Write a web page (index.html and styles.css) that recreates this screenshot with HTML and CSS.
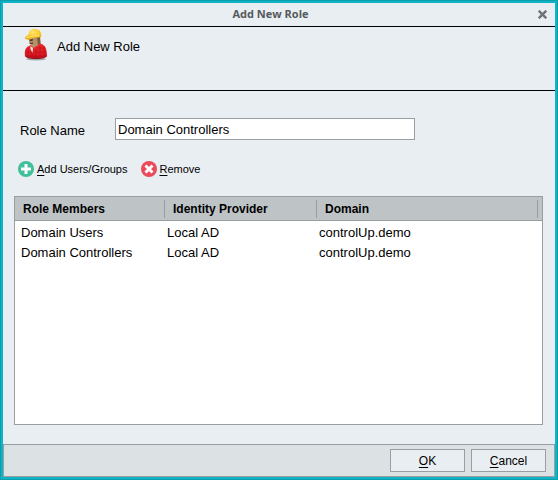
FILE: index.html
```html
<!DOCTYPE html>
<html lang="en">
    <head>
        <meta charset="utf-8">
        <title>Add New Role</title>
        <link rel="stylesheet" href="styles.css">
    </head>
    <body>
        <form class="dialog">
            <div class="titlebar">
                <span class="title">Add New Role</span>
                <button type="button" class="close" aria-label="Close">
                    <svg width="9" height="9" viewBox="0 0 9 9"><path d="M0.700 0.700L8.300 8.300M8.300 0.700L0.700 8.300" stroke="#6d7275" stroke-width="2.400"/></svg>
                </button>
            </div>
            <header class="banner">
                <!-- worker with a hard hat -->
                <svg class="worker" width="24" height="34" viewBox="0 0 24 34">
                    <defs>
                        <linearGradient id="shirt" x1="0" y1="0" x2="0" y2="1">
                            <stop offset="0" stop-color="#ee2a2c"/>
                            <stop offset="0.8" stop-color="#d51522"/>
                            <stop offset="1" stop-color="#8e0d16"/>
                        </linearGradient>
                        <radialGradient id="hat" cx="0.5" cy="0.3" r="0.8">
                            <stop offset="0" stop-color="#ffe770"/>
                            <stop offset="0.5" stop-color="#fbc926"/>
                            <stop offset="1" stop-color="#e9a412"/>
                        </radialGradient>
                    </defs>
                    <ellipse cx="12" cy="31" rx="10" ry="1.500" fill="#9fa3a5"/>
                    <path d="M5 10L16 8L16.500 16L13 20L9 20L7 17L5 15Z" fill="#b48f68"/>
                    <path d="M13 10L16 9L16.500 16L14 17Z" fill="#7b5a3b"/>
                    <path d="M5 11.500L9 11L8.500 13L6 13ZM5.500 15L9 14.500L9 16L6.500 16Z" fill="#4f3a28"/>
                    <path d="M1 28C0 22 2 18.500 7 17L9.500 20L16.500 15.500C21 17 23 20 23 28C22 32 2 32 1 28Z" fill="url(#shirt)"/>
                    <path d="M4 20V30M8 24V31M12 21V31M16 18V31M20 19V30M2 24H22M1 28H23M13 20H21" stroke="#b00f1b" stroke-width="0.500" fill="none"/>
                    <path d="M6.500 18L9 20L8.500 25L6.500 21Z" fill="#f4e7e3"/>
                    <path d="M1 10C1 8 4 8 4.500 6C5 2 8 1 11 1C16 1 18 5 17 9.500C13 9 9 10 6 11.500C3 12 1 11 1 10Z" fill="url(#hat)"/>
                    <path d="M2 9.500C6 9.500 10 7 15 7.500" stroke="#fff0a0" stroke-width="0.700" fill="none"/>
                </svg>
                <h1 class="heading">Add New Role</h1>
            </header>
            <main class="content">
                <div class="field">
                    <label for="role" class="field-label">Role Name</label>
                    <input type="text" id="role" name="role" class="field-input" value="Domain Controllers">
                </div>
                <div class="tools">
                    <button type="button" class="tool">
                        <svg width="16" height="16" viewBox="0 0 16 16"><circle cx="8" cy="8" r="8" fill="#41bf9b"/><path d="M8 3V13M3 8H13" stroke="#fff" stroke-width="3"/></svg>
                        <span><u>A</u>dd Users/Groups</span>
                    </button>
                    <button type="button" class="tool">
                        <svg width="16" height="16" viewBox="0 0 16 16"><circle cx="8" cy="8" r="8" fill="#e94b5b"/><path d="M4.500 4.500L11.500 11.500M11.500 4.500L4.500 11.500" stroke="#fff" stroke-width="3"/></svg>
                        <span><u>R</u>emove</span>
                    </button>
                </div>
                <div class="list">
                    <table class="members">
                        <thead>
                            <tr>
                                <th class="col-member"><div class="head">Role Members</div></th>
                                <th class="col-provider"><div class="head">Identity Provider</div></th>
                                <th class="col-domain"><div class="head">Domain</div></th>
                            </tr>
                        </thead>
                        <tbody>
                            <tr>
                                <td class="first">Domain Users</td>
                                <td>Local AD</td>
                                <td>controlUp.demo</td>
                            </tr>
                            <tr>
                                <td class="first">Domain Controllers</td>
                                <td>Local AD</td>
                                <td>controlUp.demo</td>
                            </tr>
                        </tbody>
                    </table>
                </div>
            </main>
            <footer class="footer">
                <button type="submit" class="button"><span><u>O</u>K</span></button>
                <button type="button" class="button"><span><u>C</u>ancel</span></button>
            </footer>
        </form>
    </body>
</html>
```
FILE: styles.css
```css
* {
    box-sizing: border-box;
}

body {
    margin: 0;
    font-family: "Liberation Sans", Arial, sans-serif;
    font-size: 13px;
    color: #000;
    background: #e9eef2;
}

button {
    font-family: inherit;
    color: inherit;
    padding: 0;
    border: none;
    background: none;
}

u {
    text-underline-offset: 2px;
}

.dialog {
    display: flex;
    flex-direction: column;
    min-height: 100vh;
    border: 1px solid #08a0ae;
    box-shadow: inset 0 0 0 2px #10b3c3;
    padding: 2px;
}

.titlebar {
    display: flex;
    align-items: center;
    height: 24px;
    padding-right: 8px;
    border-bottom: 1px solid #000;
}

.title {
    flex: 1;
    padding-bottom: 2px;
    font-family: "Open Sans", "Noto Sans", sans-serif;
    font-size: 11px;
    line-height: 16px;
    font-weight: 700;
    text-align: center;
    color: #55595c;
}

.close {
    display: flex;
}

.banner {
    display: flex;
    align-items: flex-start;
    gap: 9px;
    height: 64px;
    padding: 1px 21px;
    border-bottom: 1px solid #000;
}

.heading {
    margin: 11px 0 0;
    font-size: 13px;
    line-height: 16px;
    font-weight: normal;
}

.content {
    display: flex;
    flex: 1;
    flex-direction: column;
    padding: 27px 12px 19px 11px;
}

.field {
    display: flex;
    align-items: center;
    padding-left: 6px;
}

.field-label {
    width: 95px;
    line-height: 16px;
    padding-top: 3px;
}

.field-input {
    width: 300px;
    height: 22px;
    padding: 0 2px;
    border: 1px solid #999ea1;
    border-radius: 0;
    background: #fff;
    font-family: inherit;
    font-size: 13px;
}

.tools {
    display: flex;
    gap: 13px;
    padding: 21px 4px 19px;
}

.tool {
    display: flex;
    align-items: center;
    gap: 3px;
    font-size: 11px;
    line-height: 16px;
}

.list {
    flex: 1;
    border: 1px solid #999ea1;
    background: #fff;
}

.members {
    width: 100%;
    table-layout: fixed;
    border-collapse: separate;
    border-spacing: 0;
}

.members th {
    padding: 3px 0 2px;
    border-bottom: 1px solid #999ea1;
    background: #bec4c6;
    font-size: 12px;
    text-align: left;
}

.col-member {
    width: 150px;
}

.col-provider {
    width: 152px;
}

.members th:last-child {
    padding-right: 4px;
}

.head {
    padding-left: 8px;
    border-right: 1px solid #999ea1;
    line-height: 18px;
}

.members td {
    height: 20px;
    padding: 0 2px;
    line-height: 20px;
}

.members td.first {
    padding-left: 6px;
}

.members tbody::before {
    content: "";
    display: table-row;
    height: 2px;
}

.footer {
    display: flex;
    justify-content: flex-end;
    gap: 6px;
    padding: 4px 8px;
    border: 1px solid #999ea1;
    background: #dce1e4;
}

.button {
    width: 75px;
    height: 23px;
    border: 1px solid #999ea1;
    background: #e9eef2;
    font-size: 12px;
}
```
